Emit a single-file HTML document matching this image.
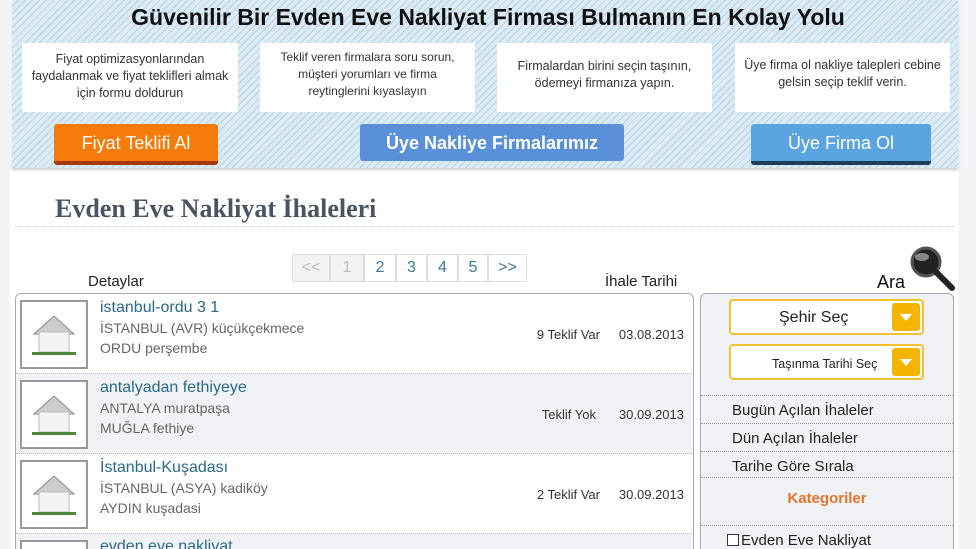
<!DOCTYPE html>
<html style="width:976px;height:549px;overflow:hidden"><head><meta charset="utf-8"><style>
*{margin:0;padding:0;box-sizing:border-box}
body{width:976px;height:549px;overflow:hidden;background:#f3f4f5;font-family:"Liberation Sans",Arial,sans-serif;position:relative}
.abs{position:absolute}
#main{left:10px;top:0;width:948px;height:549px;background:#fff}
#banner{left:12px;top:0;width:946px;height:168px;background:repeating-linear-gradient(135deg,#dcecf7 0 4px,#b9cfdf 4px 5px);box-shadow:0 2px 3px #ccc}
h1{position:absolute;left:0;width:976px;top:4px;text-align:center;font-size:23px;font-weight:bold;color:#111}
.box{position:absolute;top:43px;height:69px;background:#fff;text-align:center;font-size:12.5px;color:#333;line-height:17px;padding-top:8px}
.btn{position:absolute;top:124px;height:41px;color:#fff;font-size:18px;text-align:center;line-height:38px;border-radius:3px}
h2{position:absolute;left:55px;top:194px;font-family:"Liberation Serif",serif;font-size:26px;font-weight:bold;color:#4a5563}
.pg{position:absolute;top:254px;height:28px;width:31px;border:1px solid #ddd;font-size:16px;color:#3a7a9a;text-align:center;line-height:26px}
.row{position:absolute;left:16px;width:676px;height:80px;border-bottom:1px dotted #bbb}
.thumb{position:absolute;left:4px;top:6px;width:68px;height:69px;border:2px solid #999;background:#fff}
.t1{position:absolute;left:84px;top:5px;font-size:16px;color:#2a6a8a}
.t2{position:absolute;left:84px;font-size:14px;color:#666}
.tk{position:absolute;right:92px;top:33px;font-size:13px;color:#333}
.dt{position:absolute;right:8px;top:33px;font-size:13px;color:#333}
.sel{position:absolute;left:729px;width:195px;height:36px;border:2px solid #f2c230;border-radius:4px;background:#fff;color:#222}
.sel i{position:absolute;right:2px;top:2px;width:28px;height:28px;background:#f5b400;border-radius:3px}
.sel i:after{content:"";position:absolute;left:8px;top:11px;border:6px solid transparent;border-top:7px solid #fff}
.sl{position:absolute;left:701px;width:252px;border-top:1px dotted #999;font-size:15px;color:#222;padding-left:31px}
</style></head><body>
<div class="abs" id="main"></div>
<div class="abs" style="left:15px;top:226px;width:940px;border-top:1px dotted #ccc"></div>
<div class="abs" id="banner"></div>
<h1>Güvenilir Bir Evden Eve Nakliyat Firması Bulmanın En Kolay Yolu</h1>
<div class="box" style="left:22px;width:216px">Fiyat optimizasyonlarından<br>faydalanmak ve fiyat teklifleri almak<br>için formu doldurun</div>
<div class="box" style="left:260px;width:215px;font-size:12px;padding-top:6px">Teklif veren firmalara soru sorun,<br>müşteri yorumları ve firma<br>reytinglerini kıyaslayın</div>
<div class="box" style="left:497px;width:215px;padding-top:15px">Firmalardan birini seçin taşının,<br>ödemeyi firmanıza yapın.</div>
<div class="box" style="left:735px;width:215px;padding-top:14px">Üye firma ol nakliye talepleri cebine<br>gelsin seçip teklif verin.</div>
<div class="btn" style="left:54px;width:164px;background:#f57c0a;border-bottom:4px solid #a8380a">Fiyat Teklifi Al</div>
<div class="btn" style="left:360px;width:264px;height:37px;background:#5a90d8;font-weight:bold;line-height:38px">Üye Nakliye Firmalarımız</div>
<div class="btn" style="left:751px;width:180px;background:#5aa5e0;border-bottom:4px solid #1f3e5a">Üye Firma Ol</div>
<h2>Evden Eve Nakliyat İhaleleri</h2>
<div class="pg" style="left:292px;width:38px;color:#bbb;background:#f3f3f3">&lt;&lt;</div>
<div class="pg" style="left:330px;width:34px;color:#bbb;background:#f3f3f3">1</div>
<div class="pg" style="left:364px;width:32px">2</div>
<div class="pg" style="left:396px;width:31px">3</div>
<div class="pg" style="left:427px;width:31px">4</div>
<div class="pg" style="left:458px;width:30px">5</div>
<div class="pg" style="left:488px;width:39px">&gt;&gt;</div>
<div class="abs" style="left:88px;top:273px;font-size:15px;color:#222">Detaylar</div>
<div class="abs" style="left:605px;top:273px;font-size:15px;color:#222">İhale Tarihi</div>
<div class="abs" style="left:15px;top:293px;width:679px;height:256px;border:1px solid #aaa;border-bottom:none;border-radius:6px 6px 0 0;background:#fff;overflow:hidden">
<div class="row" style="top:0;left:0"><div class="thumb"><svg width="64" height="65"><polygon points="32,14 12,32 52,32" fill="#ccc" stroke="#888"/><rect x="17" y="30" width="30" height="20" fill="#f4f4f4" stroke="#bbb"/><rect x="10" y="50" width="44" height="3" fill="#4a8a3a"/></svg></div><div class="t1">istanbul-ordu 3 1</div><div class="t2" style="top:26px">İSTANBUL (AVR) küçükçekmece</div><div class="t2" style="top:46px">ORDU perşembe</div><div class="tk">9 Teklif Var</div><div class="dt">03.08.2013</div></div>
<div class="row" style="top:80px;left:0;background:#f0f2f5"><div class="thumb"><svg width="64" height="65"><polygon points="32,14 12,32 52,32" fill="#ccc" stroke="#888"/><rect x="17" y="30" width="30" height="20" fill="#f4f4f4" stroke="#bbb"/><rect x="10" y="50" width="44" height="3" fill="#4a8a3a"/></svg></div><div class="t1">antalyadan fethiyeye</div><div class="t2" style="top:26px">ANTALYA muratpaşa</div><div class="t2" style="top:46px">MUĞLA fethiye</div><div class="tk" style="right:96px">Teklif Yok</div><div class="dt">30.09.2013</div></div>
<div class="row" style="top:160px;left:0"><div class="thumb"><svg width="64" height="65"><polygon points="32,14 12,32 52,32" fill="#ccc" stroke="#888"/><rect x="17" y="30" width="30" height="20" fill="#f4f4f4" stroke="#bbb"/><rect x="10" y="50" width="44" height="3" fill="#4a8a3a"/></svg></div><div class="t1">İstanbul-Kuşadası</div><div class="t2" style="top:26px">İSTANBUL (ASYA) kadiköy</div><div class="t2" style="top:46px">AYDIN kuşadasi</div><div class="tk">2 Teklif Var</div><div class="dt">30.09.2013</div></div>
<div class="row" style="top:240px;left:0;background:#f0f2f5;border:none"><div class="thumb"></div><div class="t1" style="top:4px">evden eve nakliyat</div></div>
</div>
<div class="abs" style="left:700px;top:293px;width:254px;height:256px;border:1px solid #aaa;border-bottom:none;border-radius:6px 6px 0 0;background:#f0f2f5"></div>
<div class="abs" style="left:877px;top:272px;font-size:18px;color:#111">Ara</div>
<svg class="abs" style="left:908px;top:244px" width="48" height="48"><circle cx="18" cy="18" r="14" fill="#222" stroke="#555" stroke-width="3"/><ellipse cx="14" cy="13" rx="7" ry="4" fill="#888"/><line x1="28" y1="28" x2="44" y2="44" stroke="#222" stroke-width="6" stroke-linecap="round"/></svg>
<div class="sel" style="top:299px;font-size:16px;padding:8px 0 0 48px">Şehir Seç<i></i></div>
<div class="sel" style="top:344px;font-size:12.5px;padding:11px 0 0 41px">Taşınma Tarihi Seç<i></i></div>
<div class="sl" style="top:395px;height:28px;padding-top:6px">Bugün Açılan İhaleler</div>
<div class="sl" style="top:423px;height:28px;padding-top:6px">Dün Açılan İhaleler</div>
<div class="sl" style="top:451px;height:26px;padding-top:6px">Tarihe Göre Sırala</div>
<div class="sl" style="top:477px;height:48px;padding:12px 0 0 0;text-align:center;color:#e8712a;font-weight:bold">Kategoriler</div>
<div class="sl" style="top:525px;height:24px;padding:6px 0 0 26px"><span style="display:inline-block;width:12px;height:12px;border:1px solid #333;background:#fff;vertical-align:-1px;margin-right:2px"></span>Evden Eve Nakliyat</div>
</body></html>
